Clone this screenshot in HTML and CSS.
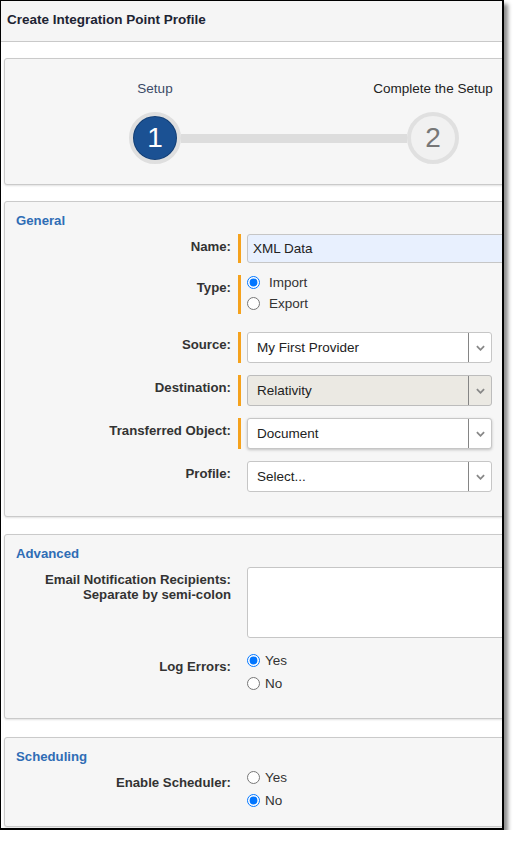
FILE: index.html
```html
<!DOCTYPE html>
<html lang="en">
<head>
    <meta charset="UTF-8">
    <meta name="viewport" content="width=device-width, initial-scale=1.0">
    <title>Create Integration Point Profile</title>
    <link rel="stylesheet" href="styles.css">
</head>
<body>
    <div class="frame">
        <div class="page-header">
            <h1 class="page-title">Create Integration Point Profile</h1>
        </div>

        <!-- Wizard steps -->
        <div class="panel steps-panel">
            <div class="stepper">
                <div class="step step-active">
                    <span class="step-label">Setup</span>
                    <span class="step-circle">1</span>
                </div>
                <div class="step-line"></div>
                <div class="step">
                    <span class="step-label">Complete the Setup</span>
                    <span class="step-circle">2</span>
                </div>
            </div>
        </div>

        <!-- General -->
        <div class="panel panel-general">
            <h2 class="panel-title">General</h2>
            <div class="field">
                <label class="field-label" for="name">Name:</label>
                <div class="field-control required">
                    <input class="text-input" id="name" type="text" value="XML Data">
                </div>
            </div>
            <div class="field field-type">
                <span class="field-label">Type:</span>
                <div class="field-control required">
                    <div class="options options-tight">
                        <label class="option"><input type="radio" name="type" checked> Import</label>
                        <label class="option"><input type="radio" name="type"> Export</label>
                    </div>
                </div>
            </div>
            <div class="field">
                <span class="field-label">Source:</span>
                <div class="field-control required">
                    <div class="select">
                        <span class="select-text">My First Provider</span>
                        <span class="select-arrow"><svg viewBox="0 0 10 6"><polyline points="1,1 5,5 9,1"/></svg></span>
                    </div>
                </div>
            </div>
            <div class="field">
                <span class="field-label">Destination:</span>
                <div class="field-control required">
                    <div class="select select-disabled">
                        <span class="select-text">Relativity</span>
                        <span class="select-arrow"><svg viewBox="0 0 10 6"><polyline points="1,1 5,5 9,1"/></svg></span>
                    </div>
                </div>
            </div>
            <div class="field">
                <span class="field-label">Transferred Object:</span>
                <div class="field-control required">
                    <div class="select select-focus">
                        <span class="select-text">Document</span>
                        <span class="select-arrow"><svg viewBox="0 0 10 6"><polyline points="1,1 5,5 9,1"/></svg></span>
                    </div>
                </div>
            </div>
            <div class="field">
                <span class="field-label">Profile:</span>
                <div class="field-control">
                    <div class="select">
                        <span class="select-text">Select...</span>
                        <span class="select-arrow"><svg viewBox="0 0 10 6"><polyline points="1,1 5,5 9,1"/></svg></span>
                    </div>
                </div>
            </div>
        </div>

        <!-- Advanced -->
        <div class="panel panel-advanced">
            <h2 class="panel-title">Advanced</h2>
            <div class="field">
                <label class="field-label" for="emails">Email Notification Recipients:<br>Separate by semi-colon</label>
                <div class="field-control">
                    <textarea class="text-area" id="emails"></textarea>
                </div>
            </div>
            <div class="field field-log">
                <span class="field-label">Log Errors:</span>
                <div class="field-control">
                    <div class="options">
                        <label class="option"><input type="radio" name="log" checked> Yes</label>
                        <label class="option"><input type="radio" name="log"> No</label>
                    </div>
                </div>
            </div>
        </div>

        <!-- Scheduling -->
        <div class="panel panel-last">
            <h2 class="panel-title">Scheduling</h2>
            <div class="field">
                <span class="field-label">Enable Scheduler:</span>
                <div class="field-control">
                    <div class="options options-shift">
                        <label class="option"><input type="radio" name="sched"> Yes</label>
                        <label class="option"><input type="radio" name="sched" checked> No</label>
                    </div>
                </div>
            </div>
        </div>
    </div>
</body>
</html>
```

FILE: styles.css
```css
body {
    margin: 0;
    background: #fff;
    font-family: "Liberation Sans", Arial, sans-serif;
    color: #333;
}
.frame {
    width: 501px;
    height: 827px;
    overflow: hidden;
    border-style: solid;
    border-color: #000;
    border-width: 1px 2px 2px 1px;
    box-shadow: 4px 4px 4px rgba(0, 0, 0, 0.45);
    background: #fff;
}
.page-header {
    box-sizing: border-box;
    height: 41px;
    padding: 11px 6px 0;
    background: #f5f5f5;
    border-bottom: 1px solid #c9c9c9;
}
.page-title {
    margin: 0;
    font-size: 13.5px;
    line-height: 16px;
    font-weight: bold;
    color: #1d2433;
}
.panel {
    width: 540px;
    margin: 16px 0 0 3px;
    padding: 11px 0 23px 11px;
    box-sizing: border-box;
    background: #f6f6f6;
    border: 1px solid #cacaca;
    border-radius: 3px;
    box-shadow: 0 1px 2px rgba(0, 0, 0, 0.12);
}
.panel + .panel {
    margin-top: 16px;
}
.panel.panel-general {
    padding-bottom: 24px;
}
.panel.panel-advanced {
    margin-top: 17px;
    padding-bottom: 28px;
}
.panel.panel-last {
    margin-top: 18px;
    padding-bottom: 19px;
}
.panel-title {
    margin: 0 0 5px;
    font-size: 13.2px;
    line-height: 16px;
    font-weight: bold;
    color: #2f6db5;
}

/* steps */
.steps-panel {
    padding: 22px 0 20px 124px;
}
.stepper {
    display: flex;
    align-items: flex-end;
}
.step {
    width: 52px;
    display: flex;
    flex-direction: column;
    align-items: center;
}
.step-label {
    white-space: nowrap;
    font-size: 13.5px;
    line-height: 16px;
    color: #222;
    margin-bottom: 15px;
}
.step-active .step-label {
    color: #3b4a66;
}
.step-circle {
    box-sizing: border-box;
    width: 52px;
    height: 52px;
    border-radius: 50%;
    border: 4px solid #e0e0e0;
    background: #f1f1f1;
    color: #777;
    font-size: 28px;
    display: flex;
    align-items: center;
    justify-content: center;
}
.step-active .step-circle {
    background: #1b5193;
    color: #fff;
    border-color: #dfdfdf;
    box-shadow: inset 0 0 0 1px #153f73;
}
.step-line {
    width: 226px;
    height: 9px;
    margin-bottom: 21px;
    background: #dddddd;
}

/* form rows */
.field {
    display: flex;
    align-items: flex-start;
}
.field + .field {
    margin-top: 12px;
}
.field-type + .field {
    margin-top: 18px;
}
.field + .field-log {
    margin-top: 16px;
}
.field-label {
    box-sizing: border-box;
    flex: 0 0 222px;
    padding: 5px 7px 0 0;
    text-align: right;
    font-size: 13.2px;
    line-height: 15px;
    font-weight: bold;
    color: #333;
}
.field-control {
    flex: 1;
    padding-left: 6px;
    border-left: 3px solid transparent;
}
.field-control.required {
    border-left-color: #f5a21d;
}
.text-input {
    box-sizing: border-box;
    display: block;
    width: 100%;
    height: 29px;
    margin: 0;
    padding: 0 5px;
    border: 1px solid #c6c6c6;
    border-radius: 3px;
    background: #e8f0fe;
    font-family: inherit;
    font-size: 13.5px;
    color: #222;
}
.text-area {
    box-sizing: border-box;
    display: block;
    width: 100%;
    height: 71px;
    margin: 0;
    border: 1px solid #c6c6c6;
    border-radius: 3px;
    background: #fff;
    resize: none;
}
.select {
    box-sizing: border-box;
    width: 245px;
    height: 31px;
    display: flex;
    align-items: stretch;
    border: 1px solid #c6c6c6;
    border-radius: 3px;
    background: #fff;
}
.select-disabled {
    background: #ebe9e3;
    border-color: #bcbcbc;
}
.select-focus {
    box-shadow: 0 1px 3px rgba(0, 0, 0, 0.22);
}
.select-text {
    flex: 1;
    padding-left: 9px;
    font-size: 13.5px;
    line-height: 29px;
    color: #222;
}
.select-arrow {
    width: 22px;
    border-left: 1px solid #858585;
    display: flex;
    align-items: center;
    justify-content: center;
}
.select-arrow svg {
    width: 9px;
    height: 6px;
    fill: none;
    stroke: #888;
    stroke-width: 2;
}

/* radios */
.options {
    display: flex;
    flex-direction: column;
    gap: 10px;
}
.options-tight {
    gap: 8px;
    padding: 1px 0 4px;
}
.options-shift {
    padding-top: 1px;
}
.option {
    display: flex;
    align-items: center;
    gap: 5px;
    height: 13px;
    font-size: 13.5px;
    color: #333;
}
.options-tight .option {
    gap: 9px;
}
.option input {
    width: 13px;
    height: 13px;
    margin: 0;
}
```
